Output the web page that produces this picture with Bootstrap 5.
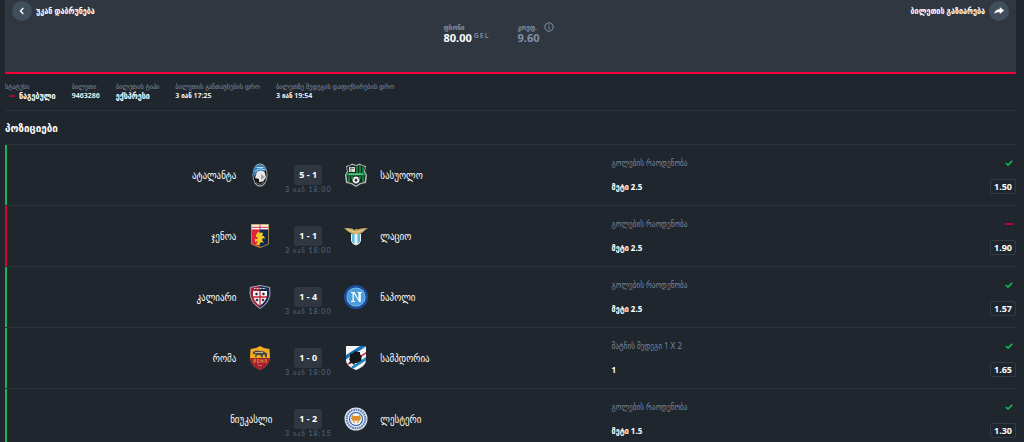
<!DOCTYPE html>
<html lang="ka">
<head>
<meta charset="utf-8">
<meta name="viewport" content="width=device-width, initial-scale=1">
<title>ბილეთი 9463286</title>
<link href="https://cdn.jsdelivr.net/npm/bootstrap@5.3.0/dist/css/bootstrap.min.css" rel="stylesheet">
<style>
  body { background: #20262d; color: #fff; font-family: "Noto Sans", "DejaVu Sans Condensed", "DejaVu Sans", sans-serif; font-size: 8px; line-height: 10px; overflow-x: hidden; }
  .ticket { margin: 0 8px 0 5px; }
  .ticket-head { background: #303741; border-bottom: 2px solid #f5003d; height: 74px; padding: 1px 7px 0; border-radius: 0 0 1px 1px; }
  .ticket-head .round { width: 20px; height: 20px; background: #414e5b; border-radius: 50%; }
  .act { border: 0; background: none; color: #fff; font-size: 8px; font-weight: 700; line-height: 20px; }
  .stake-label, .info-label { color: #8091a8; font-size: 7px; line-height: 8px; }
  .stake-label { font-weight: 600; }
  .stake-value { font-size: 11px; line-height: 12px; font-weight: 700; }
  .stake-cur { color: #8091a8; font-size: 7px; line-height: 8px; letter-spacing: 1px; font-weight: 600; }
  .stakes { margin-top: 1px; gap: 28px; padding-right: 24px; }
  .stake-box { padding-top: 2px; }
  .stake-amount { gap: 2px; }
  .muted { color: #8091a8; }
  .info-bar { height: 37px; padding-top: 9px; border-bottom: 1px solid #2b323c; gap: 16px; }
  .info-value { font-size: 8px; line-height: 9px; font-weight: 600; }
  .info-value.num { font-size: 7px; }
  .section-title { font-size: 11px; line-height: 13px; font-weight: 700; padding: 10px 0; margin: 0; }
  .bet { border-top: 1px solid #2b323c; min-height: 61px; position: relative; }
  .bet::before { content: ""; position: absolute; left: 0; top: 0; bottom: -1px; width: 2px; background: #1bb255; }
  .bet.lost::before { background: #d8072f; }
  .match { width: 60%; display: grid; grid-template-columns: 1fr 48px 1fr; gap: 12px; align-items: center; }
  .team { gap: 12px; font-size: 10px; line-height: 12px; font-weight: 500; }
  .result { padding-top: 8px; }
  .score { background: #303741; border-radius: 3px; width: 28px; line-height: 20px; font-size: 9px; font-weight: 700; }
  .kick { color: #566b85; font-family: Lato, "DejaVu Sans Condensed", "DejaVu Sans", sans-serif; font-size: 7px; line-height: 9px; letter-spacing: 1px; white-space: nowrap; }
  .market { color: #75859f; font-size: 8px; line-height: 12px; }
  .pick { font-size: 8px; line-height: 16px; font-weight: 700; }
  .odd { border: 1px solid #333a45; border-radius: 2px; font-size: 9px; line-height: 13px; font-weight: 700; width: 26px; }
  .detail { padding: 12px 0 0; }
  .detail-col { gap: 10px; }
  svg { display: block; flex: none; }
</style>
</head>
<body>
<svg width="0" height="0" class="position-absolute" aria-hidden="true">
  <symbol id="tick" viewBox="0 0 8 6"><path d="M.8 3 3 5.1 7.2.9" fill="none" stroke="#12b853" stroke-width="1.6"/></symbol>
  <symbol id="dash" viewBox="0 0 8 6"><path d="M0 3h8" stroke="#c10a32" stroke-width="1.8"/></symbol>
</svg>
<main class="ticket">
  <header class="ticket-head">
    <div class="d-flex justify-content-between">
      <button type="button" class="act p-0 d-flex gap-1"><span class="round d-flex align-items-center justify-content-center"><svg width="8" height="8" viewBox="0 0 8 8"><path d="M5.3 1 2.5 4l2.8 3" fill="none" stroke="#fff" stroke-width="1.4"/></svg></span>უკან დაბრუნება</button>
      <button type="button" class="act p-0 d-flex gap-1">ბილეთის გაზიარება<span class="round d-flex align-items-center justify-content-center"><svg width="10" height="8" viewBox="0 0 10 8"><path d="M5.8 0 10 3.6 5.8 7V5.2C3 5 1.400 5.500.300 7 .600 4 2.500 2.200 5.800 2z" fill="#fff"/></svg></span></button>
    </div>
    <div class="stakes d-flex justify-content-center">
      <div class="stake-box">
        <div class="stake-label">ფსონი</div>
        <div class="stake-amount d-flex"><span class="stake-value">80.00</span><span class="stake-cur">GEL</span></div>
      </div>
      <div class="d-flex gap-1">
        <div class="stake-box">
          <div class="stake-label">კოეფ.</div>
          <div class="stake-value muted">9.60</div>
        </div>
        <svg width="10" height="10" viewBox="0 0 10 10"><circle cx="5" cy="5" r="4.200" fill="none" stroke="#8091a8"/><path d="M5 4.300v3M5 2.500v1" stroke="#8091a8"/></svg>
      </div>
    </div>
  </header>

  <section class="info-bar d-flex">
    <div><div class="info-label">სტატუსი</div><div class="info-value d-flex align-items-center gap-1"><svg class="ms-1" width="6" height="6" viewBox="0 0 8 6"><use href="#dash"/></svg>ნაგებული</div></div>
    <div><div class="info-label">ბილეთი</div><div class="info-value num">9463286</div></div>
    <div><div class="info-label">ბილეთის ტიპი</div><div class="info-value">ექსპრესი</div></div>
    <div><div class="info-label">ბილეთის განთავსების დრო</div><div class="info-value num">3 იან 17:25</div></div>
    <div><div class="info-label">ბილეთზე შედეგის დაფიქსირების დრო</div><div class="info-value num">3 იან 19:54</div></div>
  </section>

  <h1 class="section-title">პოზიციები</h1>

  <section>
    <article class="bet d-flex">
      <div class="match">
        <div class="team d-flex align-items-center justify-content-end">ატალანტა
          <svg width="24" height="24" viewBox="0 0 24 24"><ellipse cx="12" cy="12" rx="7.500" ry="11.500" fill="#b9bcbd"/><ellipse cx="12" cy="12" rx="6.700" ry="10.600" fill="#151719"/><path d="M5.500 12C5.500 5 8 1.500 12 1.500c3 0 5 2 6 6L14 9l-4 0-4 5z" fill="#2f83c5"/><path d="M7 8.500c3-3 6-3 10-1.500M8.500 4.500h7" stroke="#e8f0f5" stroke-width=".8" fill="none"/><path d="M9 9c2-1.500 5-1.500 7.500-.200l1.500 5.700-3 4-4 .500 0-3-4-1z" fill="#e8e8e8"/><path d="m13 11 4 3-4 3z" fill="#a5a5a5"/><path d="M8 19c2 3 6 3 8 0" stroke="#777" fill="none"/></svg></div>
        <div class="result d-flex flex-column align-items-center"><div class="score text-center">5 - 1</div><div class="kick">3 იან 18:00</div></div>
        <div class="team d-flex align-items-center">
          <svg width="24" height="24" viewBox="0 0 24 24"><path d="M2 3 6 2l2-1.500 4 1.500 4-1.500L18 2l4 1-1 5 2 4-1 8-5 1-5 3-5-3-5-1-1-8 2-4z" fill="#b7bbb8"/><path d="M3 4 8 2l4 1 4-1 5 2-1 5 1.500 3-1 7-4.500 1-4 2.500L8 20l-4.500-1-1-7L4 9z" fill="#14231b"/><path d="M13 3v7M16 3v7M19 4v6M5 13v6M8 13v3M16 13v3M19 13v6" stroke="#159447" stroke-width="1.600"/><path d="M5 4h6v5H5z" fill="#d9d9d9"/><path d="M6 5.500h4M7 4v5" stroke="#555" stroke-width=".7"/><path d="M2.500 10h19v2.500h-19z" fill="#169a4b"/><path d="M5 11.200h14" stroke="#d9ede0" stroke-width=".8" stroke-dasharray="1.500 .5"/><circle cx="12" cy="17" r="3.500" fill="#eee"/><path d="m12 15.800 1.200 1-.5 1.400h-1.400l-.5-1.400zM9 16l1-1M15 16l-1-1M10 20l-.6-1M14 20l.6-1" fill="#222" stroke="#222" stroke-width=".5"/></svg>სასუოლო</div>
      </div>
      <div class="detail d-flex justify-content-between flex-grow-1">
        <div class="detail-col d-flex flex-column"><div class="market">გოლების რაოდენობა</div><div class="pick">მეტი 2.5</div></div>
        <div class="detail-col d-flex flex-column align-items-end"><svg width="12" height="12" viewBox="-1 -2 12 12"><use href="#tick" width="8" height="6" x="0" y="1"/></svg><div class="odd text-center">1.50</div></div>
      </div>
    </article>

    <article class="bet lost d-flex">
      <div class="match">
        <div class="team d-flex align-items-center justify-content-end">ჯენოა
          <svg width="24" height="24" viewBox="0 0 24 24"><path d="M3 0h18v20l-4 2-5 2-5-2-4-2z" fill="#b79a59"/><path d="M3.800.8h16.400v5H3.800z" fill="#f3f0ee"/><path d="M3.800 3.300h16.400M12 .8v5" stroke="#d92938" stroke-width=".9"/><path d="M3.800 5.500H12V23l-5-1.700-3.200-1.800z" fill="#dd2535"/><path d="M12 5.500h8.200v14L17 21.300 12 23z" fill="#102750"/><path d="m10 8 3 1 1-1 1 2-1 2 2 0 1 3-2-1-1 2 2 3-3-1-2 3-3 0 1-2 1-2-3 1 0-3 2 0 1-2-2 0 0-2z" fill="#f0c929"/></svg></div>
        <div class="result d-flex flex-column align-items-center"><div class="score text-center">1 - 1</div><div class="kick">3 იან 18:00</div></div>
        <div class="team d-flex align-items-center">
          <svg width="24" height="24" viewBox="0 0 24 24"><path d="M0 4 8 4.500l3 1.700 1-1.700 1.500 1L17 4.500 24 4l-3 2-2 2-3 2-3 1h-3L6.500 9 4 7.500z" fill="#c9ac62"/><path d="m3 5 7 3 4 0 7-3" fill="none" stroke="#ead99f" stroke-width=".8"/><path d="M7 10h10v7l-2 3-3 1.500L9 20l-2-3z" fill="#e9f3f7"/><path d="M8 10h2.500v10L8 17.500zM13.500 10H16v7.500L13.500 20z" fill="#59b9e4"/></svg>ლაციო</div>
      </div>
      <div class="detail d-flex justify-content-between flex-grow-1">
        <div class="detail-col d-flex flex-column"><div class="market">გოლების რაოდენობა</div><div class="pick">მეტი 2.5</div></div>
        <div class="detail-col d-flex flex-column align-items-end"><svg width="12" height="12" viewBox="-1 -2 12 12"><use href="#dash" width="8" height="6" x="0" y="1"/></svg><div class="odd text-center">1.90</div></div>
      </div>
    </article>

    <article class="bet d-flex">
      <div class="match">
        <div class="team d-flex align-items-center justify-content-end">კალიარი
          <svg width="24" height="24" viewBox="0 0 24 24"><path d="M12 0 22 2l.5 6c-.5 7-4 12-10.500 16C5.500 20 2 15 1.500 8L2 2z" fill="#a7abb7"/><path d="M12 1v22C6 19 3 14.500 2.500 8l.5-5.200z" fill="#a91d35"/><path d="m12 1 9 1.800.5 5.200C21 14.500 18 19 12 23z" fill="#17294e"/><path d="M5 6h14v5c-1 4-3 7-7 9.500C8 18 6 15 5 11z" fill="#f5f3f3"/><path d="M12 6v14M5 12h14" stroke="#c62238" stroke-width="1.300"/><path d="M8.500 7.800v2.400M7.300 9h2.400M15.500 7.800v2.400M14.300 9h2.400M9 13.800v2.400M7.800 15h2.400M15 13.800v2.400M13.800 15h2.400" stroke="#202338" stroke-width="1.300"/><path d="M6 3.500h12" stroke="#d6d8e0" stroke-width="1" stroke-dasharray="1 .5"/></svg></div>
        <div class="result d-flex flex-column align-items-center"><div class="score text-center">1 - 4</div><div class="kick">3 იან 18:00</div></div>
        <div class="team d-flex align-items-center">
          <svg width="24" height="24" viewBox="0 0 24 24"><circle cx="12" cy="12" r="12" fill="#1d4f9f"/><circle cx="12" cy="12" r="9.500" fill="#8fc4e8"/><circle cx="12" cy="12" r="8.800" fill="#4a9fdb"/><path d="M7 7h3.500l4 7V8h-1V7H18v1h-1.200v9h-1.500l-5.500-8.500V16h1.400v1H7v-1h1.500V8H7z" fill="#fff"/></svg>ნაპოლი</div>
      </div>
      <div class="detail d-flex justify-content-between flex-grow-1">
        <div class="detail-col d-flex flex-column"><div class="market">გოლების რაოდენობა</div><div class="pick">მეტი 2.5</div></div>
        <div class="detail-col d-flex flex-column align-items-end"><svg width="12" height="12" viewBox="-1 -2 12 12"><use href="#tick" width="8" height="6" x="0" y="1"/></svg><div class="odd text-center">1.57</div></div>
      </div>
    </article>

    <article class="bet d-flex">
      <div class="match">
        <div class="team d-flex align-items-center justify-content-end">რომა
          <svg width="24" height="24" viewBox="0 0 24 24"><path d="m12 0 4 2 5.500 1L22 12c-1 6-4 9-10 12C6 21 3 18 2 12l.500-9L8 2z" fill="#efac20"/><path d="M2 12h20c-1 6-4 9-10 12C6 21 3 18 2 12z" fill="#a31d35"/><path d="m5 6 3-1.500 8 1 3 2v4h-1.500l-1-3-2 1 .5 2h-1.500L12 9H9l-.5 2H7l.5-3L5 8z" fill="#4b4a42"/><path d="M7 6.500h8" stroke="#c9c2a5" stroke-width=".9"/><path d="M6 17v-3.500h1.500V15H6l1.500 2M9.500 13.500v3.500h1.500v-3.500zM13 17v-3.500l1 2 1-2V17M17 17v-3.500h1.500V17" fill="none" stroke="#e29b2e" stroke-width=".7"/><path d="M10 19.500h4" stroke="#c67853" stroke-width="1"/></svg></div>
        <div class="result d-flex flex-column align-items-center"><div class="score text-center">1 - 0</div><div class="kick">3 იან 18:00</div></div>
        <div class="team d-flex align-items-center">
          <svg width="24" height="24" viewBox="0 0 24 24"><path d="M2 0h20v14c0 5-5 8-10 10C7 22 2 19 2 14z" fill="#f4f4f4"/><path d="M2 9 16 0h6v.500L2 13.500z" fill="#1975b9"/><path d="m3 18 19-12v2L4 19z" fill="#d33a35"/><path d="m7 21 15-10v3.500L9 22.700z" fill="#2384c4"/><path d="m6 8 3-1 2-2 3 1 2 0 0 2 2 3-1 2 1 1-3 2-2 1-2 0-1 2-2-2-3 1 1-3-1-2 1-1z" fill="#15171a"/></svg>სამპდორია</div>
      </div>
      <div class="detail d-flex justify-content-between flex-grow-1">
        <div class="detail-col d-flex flex-column"><div class="market">მატჩის შედეგი 1 X 2</div><div class="pick">1</div></div>
        <div class="detail-col d-flex flex-column align-items-end"><svg width="12" height="12" viewBox="-1 -2 12 12"><use href="#tick" width="8" height="6" x="0" y="1"/></svg><div class="odd text-center">1.65</div></div>
      </div>
    </article>

    <article class="bet d-flex">
      <div class="match">
        <div class="team d-flex align-items-center justify-content-end">ნიუკასლი</div>
        <div class="result d-flex flex-column align-items-center"><div class="score text-center">1 - 2</div><div class="kick">3 იან 18:15</div></div>
        <div class="team d-flex align-items-center">
          <svg width="24" height="24" viewBox="0 0 24 24"><circle cx="12" cy="12" r="11.500" fill="#dfe6ef"/><circle cx="12" cy="12" r="9.300" fill="none" stroke="#5777b1" stroke-width="2" stroke-dasharray="1.600 .8"/><circle cx="12" cy="12" r="7" fill="#2857a3"/><circle cx="12" cy="12" r="6" fill="#eef2f6"/><path d="m8 8 2 1h4l2-1 1 4-2 2-1 2h-4l-1-2-2-2z" fill="#d9902d"/><path d="m10 13 2 1 2-1-1 4h-2z" fill="#f4ead8"/></svg>ლესტერი</div>
      </div>
      <div class="detail d-flex justify-content-between flex-grow-1">
        <div class="detail-col d-flex flex-column"><div class="market">გოლების რაოდენობა</div><div class="pick">მეტი 1.5</div></div>
        <div class="detail-col d-flex flex-column align-items-end"><svg width="12" height="12" viewBox="-1 -2 12 12"><use href="#tick" width="8" height="6" x="0" y="1"/></svg><div class="odd text-center">1.30</div></div>
      </div>
    </article>
  </section>
</main>
<script src="https://cdn.jsdelivr.net/npm/bootstrap@5.3.0/dist/js/bootstrap.bundle.min.js"></script>
</body>
</html>
